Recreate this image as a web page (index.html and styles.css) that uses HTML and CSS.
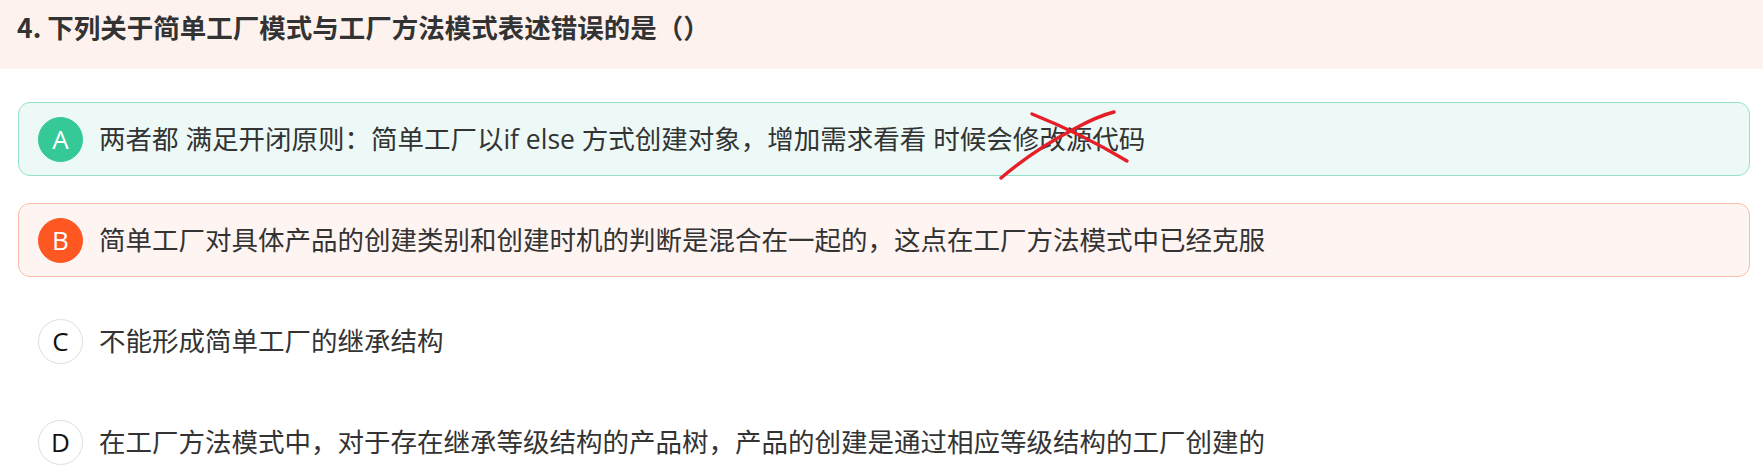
FILE: index.html
```html
<!DOCTYPE html>
<html lang="zh-CN">
<head>
<meta charset="utf-8">
<title>题目</title>
<link rel="stylesheet" href="styles.css">
</head>
<body>
<div class="question">
  <div class="q-head">
    <h2 class="q-title">4. 下列关于简单工厂模式与工厂方法模式表述错误的是（）</h2>
  </div>
  <ul class="options">
    <li class="option option-right">
      <span class="badge badge-right">A</span>
      <span class="opt-text">两者都 满足开闭原则：简单工厂以if else 方式创建对象，增加需求看看 时候会修改源代码</span>
      <svg class="scribble" width="150" height="84" viewBox="0 0 150 84" aria-hidden="true">
        <path d="M42 14 Q92 34 137 61" fill="none" stroke="#e61e27" stroke-width="3.4" stroke-linecap="round"/>
        <path d="M124 12 Q108 16 84 29 Q44 50 11 78" fill="none" stroke="#e61e27" stroke-width="3.4" stroke-linecap="round"/>
      </svg>
    </li>
    <li class="option option-wrong">
      <span class="badge badge-wrong">B</span>
      <span class="opt-text">简单工厂对具体产品的创建类别和创建时机的判断是混合在一起的，这点在工厂方法模式中已经克服</span>
    </li>
    <li class="option">
      <span class="badge">C</span>
      <span class="opt-text">不能形成简单工厂的继承结构</span>
    </li>
    <li class="option">
      <span class="badge">D</span>
      <span class="opt-text">在工厂方法模式中，对于存在继承等级结构的产品树，产品的创建是通过相应等级结构的工厂创建的</span>
    </li>
  </ul>
</div>
</body>
</html>
```

FILE: styles.css
```css
html, body {
  margin: 0;
  padding: 0;
  background: #ffffff;
}

body {
  font-family: "Open Sans", "Noto Sans CJK SC", sans-serif;
  color: #333333;
  overflow: hidden;
}

.q-head {
  height: 69px;
  box-sizing: border-box;
  background: #fdf2ee;
  padding: 10px 0 0 17px;
}

.q-title {
  margin: 0;
  font-family: "Noto Sans CJK SC", sans-serif;
  font-size: 26.5px;
  line-height: 34px;
  font-weight: 700;
  color: #333333;
}

.options {
  list-style: none;
  margin: 0;
  padding: 33px 13px 0 18px;
}

.option {
  position: relative;
  display: flex;
  align-items: center;
  gap: 16px;
  height: 74px;
  box-sizing: border-box;
  border: 1px solid transparent;
  border-radius: 12px;
  padding-left: 19px;
  margin-bottom: 27px;
}

.option:last-child {
  margin-bottom: 0;
}

.option-right {
  background: #ecf9f6;
  border-color: #96e1c8;
}

.option-wrong {
  background: #fef4f1;
  border-color: #fbbda8;
}

.badge {
  flex: none;
  width: 45px;
  height: 45px;
  box-sizing: border-box;
  border-radius: 50%;
  border: 1px solid #dedede;
  background: #ffffff;
  color: #111111;
  display: flex;
  align-items: center;
  justify-content: center;
  font-family: "Open Sans", sans-serif;
  font-size: 26px;
  line-height: 1;
}

.badge-right {
  background: #34c997;
  border-color: #34c997;
  color: #ffffff;
}

.badge-wrong {
  background: #fe5722;
  border-color: #fe5722;
  color: #ffffff;
}

.opt-text {
  font-family: "Open Sans", "Noto Sans CJK SC", sans-serif;
  font-size: 26.5px;
  line-height: 36px;
  color: #333333;
  white-space: nowrap;
}

.scribble {
  position: absolute;
  left: 971px;
  top: -3px;
  overflow: visible;
}
```
